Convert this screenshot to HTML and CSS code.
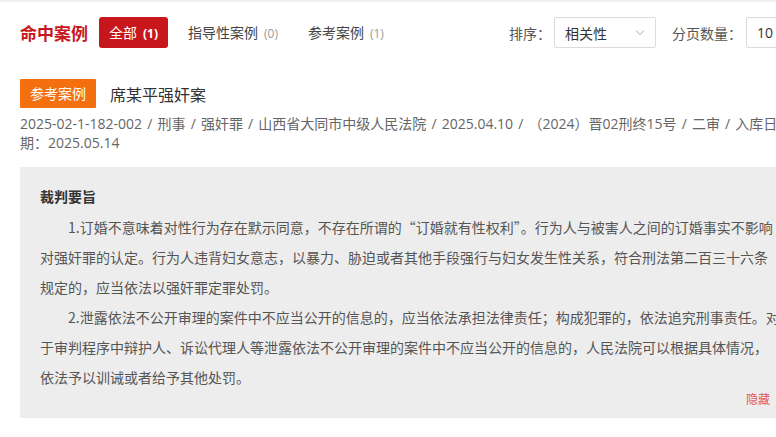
FILE: index.html
```html
<!DOCTYPE html>
<html lang="zh-CN">

<head>
    <meta charset="UTF-8">
    <meta name="viewport" content="width=device-width, initial-scale=1.0">
    <title>命中案例</title>
    <link rel="stylesheet" href="styles.css">
</head>

<body>
    <div class="topbar"></div>
    <div class="page">
        <div class="toolbar">
            <h2 class="hit-title">命中案例</h2>
            <ul class="tabs">
                <li class="tab active">全部<span class="count">(1)</span></li>
                <li class="tab">指导性案例<span class="count">(0)</span></li>
                <li class="tab">参考案例<span class="count">(1)</span></li>
            </ul>
            <div class="controls">
                <span class="label">排序：</span>
                <div class="select">
                    <span>相关性</span>
                    <svg width="10" height="6" viewBox="0 0 10 6">
                        <polyline points="1,0.5 5,4.5 9,0.5" fill="none" stroke="#a8a8a8" stroke-width="1" />
                    </svg>
                </div>
                <span class="label">分页数量：</span>
                <div class="input">10</div>
            </div>
        </div>

        <div class="case">
            <div class="case-head">
                <span class="tag">参考案例</span>
                <span class="case-title">席某平强奸案</span>
            </div>
            <p class="meta">2025-02-1-182-002 / 刑事 / 强奸罪 / 山西省大同市中级人民法院 / 2025.04.10 / （2024）晋02刑终15号 / 二审 / 入库日期：2025.05.14</p>
            <div class="summary">
                <h3>裁判要旨</h3>
                <p>1.订婚不意味着对性行为存在默示同意，不存在所谓的“订婚就有性权利”。行为人与被害人之间的订婚事实不影响对强奸罪的认定。行为人违背妇女意志，以暴力、胁迫或者其他手段强行与妇女发生性关系，符合刑法第二百三十六条规定的，应当依法以强奸罪定罪处罚。</p>
                <p>2.泄露依法不公开审理的案件中不应当公开的信息的，应当依法承担法律责任；构成犯罪的，依法追究刑事责任。对于审判程序中辩护人、诉讼代理人等泄露依法不公开审理的案件中不应当公开的信息的，人民法院可以根据具体情况，依法予以训诫或者给予其他处罚。</p>
                <div class="toggle">隐藏</div>
            </div>
        </div>
    </div>
</body>

</html>
```

FILE: styles.css
```css
html,
body {
    margin: 0;
    overflow: hidden;
    background: #fff;
}

body {
    font-family: "Open Sans", "Noto Sans CJK SC", sans-serif;
    font-size: 14px;
    color: #333;
}

.topbar {
    height: 2px;
    background: #f0f0f0;
}

.page {
    width: 781px;
    padding: 0 20px;
}

.toolbar {
    display: flex;
    align-items: center;
    margin-top: 15px;
    height: 31px;
}

.hit-title {
    margin: 0 11px 0 0;
    font-size: 17px;
    font-weight: bold;
    color: #c8161d;
}

.tabs {
    display: flex;
    list-style: none;
    margin: 0;
    padding: 0;
    gap: 10px;
}

.tab {
    height: 31px;
    line-height: 31px;
    padding: 0 10px;
    color: #444;
    border-radius: 3px;
}

.tab .count {
    margin-left: 6px;
    font-size: 12px;
    color: #999;
}

.tab.active {
    background: #c8161d;
    color: #fff;
}

.tab.active .count {
    color: #fff;
    font-weight: bold;
}

.controls {
    display: flex;
    align-items: center;
    margin-left: auto;
}

.label {
    color: #555;
    margin-right: 3px;
}

.select {
    display: flex;
    align-items: center;
    justify-content: space-between;
    box-sizing: border-box;
    width: 102px;
    height: 31px;
    padding: 0 10px;
    margin-right: 16px;
    border: 1px solid #dcdcdc;
    border-radius: 2px;
    color: #333;
}

.input {
    box-sizing: border-box;
    width: 55px;
    height: 31px;
    line-height: 29px;
    padding: 0 10px;
    margin-left: 1px;
    border: 1px solid #dcdcdc;
    border-radius: 2px;
    color: #333;
}

.case-head {
    display: flex;
    align-items: center;
    margin-top: 31px;
}

.tag {
    height: 29px;
    line-height: 29px;
    padding: 0 10px;
    background: #f4700f;
    color: #fff;
    font-size: 14px;
    border-radius: 1px;
}

.case-title {
    margin-left: 14px;
    font-size: 16px;
    color: #333;
}

.meta {
    margin: 6px 0 0;
    line-height: 19px;
    word-spacing: 1.5px;
    color: #666;
}

.summary {
    margin-top: 15px;
    padding: 15px 20px 10px;
    background: #ededed;
}

.summary h3 {
    margin: 0;
    font-size: 14px;
    line-height: 30px;
    color: #333;
}

.summary p {
    margin: 0;
    font-family: "Noto Sans CJK SC", sans-serif;
    line-height: 30px;
    text-indent: 2em;
    color: #555;
}

.toggle {
    margin-right: 11px;
    text-align: right;
    font-size: 12px;
    line-height: 16px;
    color: #e05a5a;
}
```
